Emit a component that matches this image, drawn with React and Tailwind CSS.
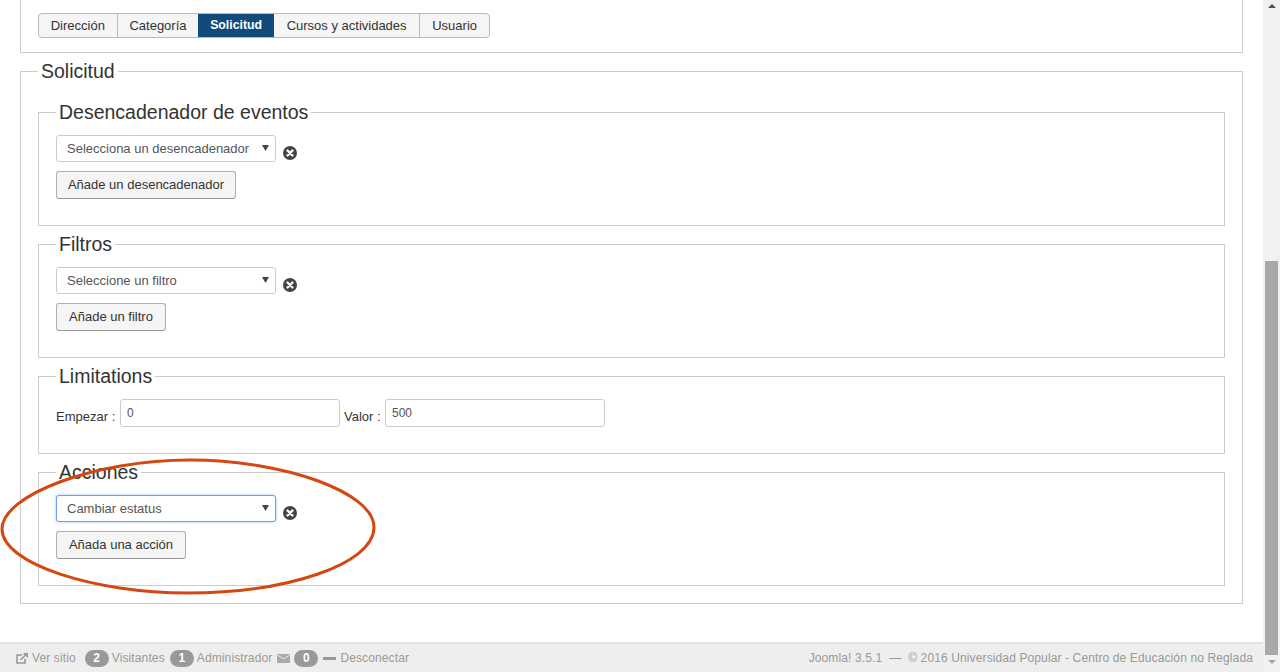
const TABS = [
  { key: 'direccion', label: 'Dirección', cls: 'w-[79px] border-r border-[#bbb]' },
  { key: 'categoria', label: 'Categoría', cls: 'w-[81px]' },
  { key: 'solicitud', label: 'Solicitud', cls: 'w-[76px] bg-[#134a7c] text-[12.3px] font-bold text-white' },
  { key: 'cursos', label: 'Cursos y actividades', cls: 'w-[147px] border-r border-[#bbb]' },
  { key: 'usuario', label: 'Usuario', cls: 'w-[69px]' },
];

function Legend({ children }) {
  return <legend className="px-[3px] text-[19.5px] leading-[24px] text-[#333]">{children}</legend>;
}

function ClearIcon() {
  return (
    <svg width="14" height="14" viewBox="0 0 14 14" className="ml-[7px] mt-[11px] shrink-0">
      <circle cx="7" cy="7" r="7" fill="#444" />
      <path d="M4.5 4.5l5 5M9.5 4.5l-5 5" stroke="#fff" strokeWidth="2.4" strokeLinecap="round" />
    </svg>
  );
}

function SelectRow({ text, focus }) {
  return (
    <div className="flex items-start">
      <div
        className={`relative flex h-[27px] w-[220px] items-center rounded-[3px] border bg-white pl-[10px] text-[13px] text-[#555] ${
          focus ? 'border-[#6f9fe8] shadow-[0_0_3px_#9dbff2]' : 'border-[#ccc]'
        }`}
      >
        {text}
        <svg width="7" height="6" viewBox="0 0 7 6" className="absolute right-[6px] top-[9px]">
          <path d="M0 0h7L3.5 6z" fill="#444" />
        </svg>
      </div>
      <ClearIcon />
    </div>
  );
}

function AddButton({ label, width }) {
  return (
    <button className={`mt-[9px] block h-[28px] rounded-[3px] border border-[#b0b0b0] border-b-[#999] bg-[#f5f5f5] text-[13px] text-[#333] ${width}`}>
      {label}
    </button>
  );
}

function Group({ title, children }) {
  return (
    <fieldset className="mt-[6px] border border-[#ccc] px-[17px] pb-[26px] pt-[11px] first:mt-0">
      <Legend>{title}</Legend>
      {children}
    </fieldset>
  );
}

function TextInput({ value }) {
  return (
    <input
      readOnly
      value={value}
      className="h-[28px] w-[220px] rounded-[3px] border border-[#ccc] bg-white px-[6px] text-[12px] text-[#555]"
    />
  );
}

function Badge({ n }) {
  return (
    <span className="flex h-[17px] w-[24px] items-center justify-center rounded-full bg-[#999] text-[12px] font-bold text-white">
      {n}
    </span>
  );
}

function Footer() {
  return (
    <footer className="flex h-[30px] shrink-0 items-center justify-between border-t-2 border-[#e2e2e2] bg-[#eee] pl-[16px] pr-[10px] text-[12px] tracking-[0.12px] text-[#999]">
      <div className="flex items-center">
        <svg width="12" height="11" viewBox="0 0 12 11" fill="none" stroke="#999" strokeWidth="1.6">
          <path d="M6 2H1v8h8V6" />
          <path d="M4.5 7L10.5 1M7.5 0.8h3.7v3.7" />
        </svg>
        <span className="ml-[4px]">Ver sitio</span>
        <span className="ml-[9px]"><Badge n="2" /></span>
        <span className="ml-[3px]">Visitantes</span>
        <span className="ml-[5px]"><Badge n="1" /></span>
        <span className="ml-[3px]">Administrador</span>
        <svg width="13" height="9" viewBox="0 0 13 9" className="ml-[5px]">
          <rect width="13" height="9" fill="#aaa" />
          <path d="M0.5 1l6 4 6-4" fill="none" stroke="#eee" strokeWidth="1" />
        </svg>
        <span className="ml-[4px]"><Badge n="0" /></span>
        <span className="ml-[5px] h-[3px] w-[13px] bg-[#999]" />
        <span className="ml-[4px]">Desconectar</span>
      </div>
      <div>Joomla! 3.5.1 &nbsp;—&nbsp; © 2016 Universidad Popular - Centro de Educación no Reglada</div>
    </footer>
  );
}

function Scrollbar() {
  return (
    <div className="flex h-full w-[17px] shrink-0 flex-col items-center bg-[#f1f1f1]">
      <svg width="8" height="4" viewBox="0 0 8 4" className="mt-[4px]">
        <path d="M4 0l4 4H0z" fill="#505050" />
      </svg>
      <div className="mt-[253px] h-[394px] w-[13px] bg-[#a8a8a8]" />
      <svg width="8" height="4" viewBox="0 0 8 4" className="mt-[5px]">
        <path d="M0 0h8L4 4z" fill="#a3a3a3" />
      </svg>
    </div>
  );
}

export default function App() {
  return (
    <div className="relative flex h-screen overflow-hidden bg-white font-['Liberation_Sans',Arial,sans-serif] text-[#333]">
      <div className="flex min-w-0 flex-1 flex-col">
        <main className="flex-1 pl-[20px] pr-[20px]">
          {/* Tabs panel */}
          <div className="border-x border-b border-[#ccc] px-[17px] pb-[14px] pt-[13px]">
            <div className="flex h-[25px] w-[452px] overflow-hidden rounded-[4px] border border-[#bbb] bg-[#f5f5f5] text-[13px] text-[#333]">
              {TABS.map(tab => (
                <div key={tab.key} className={`flex items-center justify-center ${tab.cls}`}>
                  {tab.label}
                </div>
              ))}
            </div>
          </div>

          {/* Solicitud */}
          <fieldset className="mt-[6px] border border-[#ccc] px-[17px] pb-[17px] pt-[11px]">
            <Legend>Solicitud</Legend>

            <Group title="Desencadenador de eventos">
              <SelectRow text="Selecciona un desencadenador" />
              <AddButton label="Añade un desencadenador" width="w-[180px]" />
            </Group>

            <Group title="Filtros">
              <SelectRow text="Seleccione un filtro" />
              <AddButton label="Añade un filtro" width="w-[110px]" />
            </Group>

            <Group title="Limitations">
              <div className="flex items-center text-[13px]">
                <span className="mt-[8px] w-[64px]">Empezar :</span>
                <TextInput value="0" />
                <span className="ml-[4px] mt-[8px] w-[41px]">Valor :</span>
                <TextInput value="500" />
              </div>
            </Group>

            <Group title="Acciones">
              <SelectRow text="Cambiar estatus" focus />
              <AddButton label="Añada una acción" width="w-[130px]" />
            </Group>
          </fieldset>
        </main>
        <Footer />
      </div>
      <Scrollbar />

      {/* Hand-drawn annotation oval */}
      <svg width="380" height="140" viewBox="0 0 380 140" className="pointer-events-none absolute left-0 top-[457px]">
        <path
          d="M190 3C95 3 2 38 2 72C2 107 95 136 188 136C285 136 374 108 374 70C374 36 285 3 190 3Z"
          fill="none"
          stroke="#d4480f"
          strokeWidth="3"
        />
      </svg>
    </div>
  );
}
